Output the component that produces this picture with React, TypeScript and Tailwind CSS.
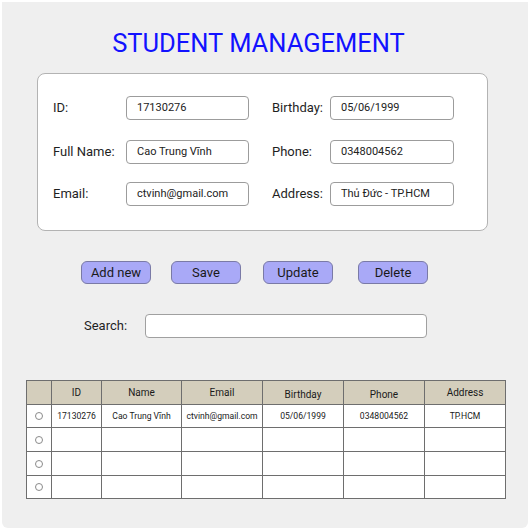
import React from 'react';

type Student = {
  id: string;
  name: string;
  email: string;
  birthday: string;
  phone: string;
  address: string;
};

const students: (Student | null)[] = [
  {
    id: '17130276',
    name: 'Cao Trung Vĩnh',
    email: 'ctvinh@gmail.com',
    birthday: '05/06/1999',
    phone: '0348004562',
    address: 'TP.HCM',
  },
  null,
  null,
  null,
];

const Field = ({ label, value, labelWidth, inputWidth }: { label: string; value: string; labelWidth: string; inputWidth: string }) => (
  <div className="flex items-center">
    <span className={`${labelWidth} text-[13px] text-[#1f1f1f]`}>{label}</span>
    <div className={`${inputWidth} h-[24px] flex items-center pl-[10px] bg-white border border-[#9c9c9c] rounded-[4px] text-[11px] text-[#222]`}>
      {value}
    </div>
  </div>
);

const Row = ({ left, right, className }: { left: [string, string]; right: [string, string]; className?: string }) => (
  <div className={`flex items-center ${className || ''}`}>
    <Field label={left[0]} value={left[1]} labelWidth="w-[73px]" inputWidth="w-[123px]" />
    <div className="ml-[23px]">
      <Field label={right[0]} value={right[1]} labelWidth="w-[58px]" inputWidth="w-[124px]" />
    </div>
  </div>
);

const ActionButton = ({ label, className }: { label: string; className?: string }) => (
  <button
    type="button"
    className={`w-[70px] h-[23px] bg-[#a9a9f7] border border-[#7a7aa6] rounded-[6px] text-[13px] text-[#1a1a1a] flex items-center justify-center ${className || ''}`}
  >
    {label}
  </button>
);

const Radio = () => (
  <span className="inline-block w-[8px] h-[8px] rounded-full border border-[#8a8a8a] bg-white" />
);

export default function App() {
  return (
    <div className="w-[532px] h-[532px] bg-white p-[2px]" style={{ fontFamily: 'Roboto, "Noto Sans", sans-serif' }}>
      <div className="w-[526px] h-[526px] bg-[#efefef] rounded-b-[6px] flex flex-col">
        {/* title */}
        <h1 className="mt-[27px] text-center text-[25.5px] leading-[29px] text-[#1212ff] pr-[13px]">STUDENT MANAGEMENT</h1>

        {/* form card */}
        <div className="mt-[15px] ml-[35px] w-[451px] h-[158px] bg-white border border-[#b3b3b3] rounded-[8px] pl-[15px] pt-[22px]">
          <Row left={['ID:', '17130276']} right={['Birthday:', '05/06/1999']} />
          <Row className="mt-[20px]" left={['Full Name:', 'Cao Trung Vĩnh']} right={['Phone:', '0348004562']} />
          <Row className="mt-[18px]" left={['Email:', 'ctvinh@gmail.com']} right={['Address:', 'Thủ Đức - TP.HCM']} />
        </div>

        {/* actions */}
        <div className="mt-[30px] ml-[79px] flex">
          <ActionButton label="Add new" />
          <ActionButton label="Save" className="ml-[20px]" />
          <ActionButton label="Update" className="ml-[22px]" />
          <ActionButton label="Delete" className="ml-[25px]" />
        </div>

        {/* search */}
        <div className="mt-[30px] ml-[82px] flex items-center">
          <span className="w-[61px] text-[13px] text-[#1f1f1f]">Search:</span>
          <div className="w-[282px] h-[24px] bg-white border border-[#a0a0a0] rounded-[4px]" />
        </div>

        {/* table */}
        <table className="mt-[42px] ml-[24px] border-collapse table-fixed w-[479px] text-[#1a1a1a]">
          <colgroup>
            <col className="w-[25px]" />
            <col className="w-[50px]" />
            <col className="w-[80px]" />
            <col className="w-[81px]" />
            <col className="w-[81px]" />
            <col className="w-[81px]" />
            <col className="w-[81px]" />
          </colgroup>
          <thead>
            <tr className="h-[24px] bg-[#d4cebc] text-[10px]">
              <th className="border border-[#6e6e6e] font-normal" />
              <th className="border border-[#6e6e6e] font-normal">ID</th>
              <th className="border border-[#6e6e6e] font-normal">Name</th>
              <th className="border border-[#6e6e6e] font-normal">Email</th>
              <th className="border border-[#6e6e6e] font-normal pt-[3px]">Birthday</th>
              <th className="border border-[#6e6e6e] font-normal pt-[3px]">Phone</th>
              <th className="border border-[#6e6e6e] font-normal">Address</th>
            </tr>
          </thead>
          <tbody className="bg-white text-[8.6px] text-center">
            {students.map((s, i) => (
              <tr key={i} className={i === 0 || i === 3 ? 'h-[23px]' : 'h-[24px]'}>
                <td className="border border-[#6e6e6e]">
                  <div className="flex justify-center items-center">
                    <Radio />
                  </div>
                </td>
                <td className="border border-[#6e6e6e]">{s?.id}</td>
                <td className="border border-[#6e6e6e]">{s?.name}</td>
                <td className="border border-[#6e6e6e]">{s?.email}</td>
                <td className="border border-[#6e6e6e]">{s?.birthday}</td>
                <td className="border border-[#6e6e6e]">{s?.phone}</td>
                <td className="border border-[#6e6e6e]">{s?.address}</td>
              </tr>
            ))}
          </tbody>
        </table>
      </div>
    </div>
  );
}
